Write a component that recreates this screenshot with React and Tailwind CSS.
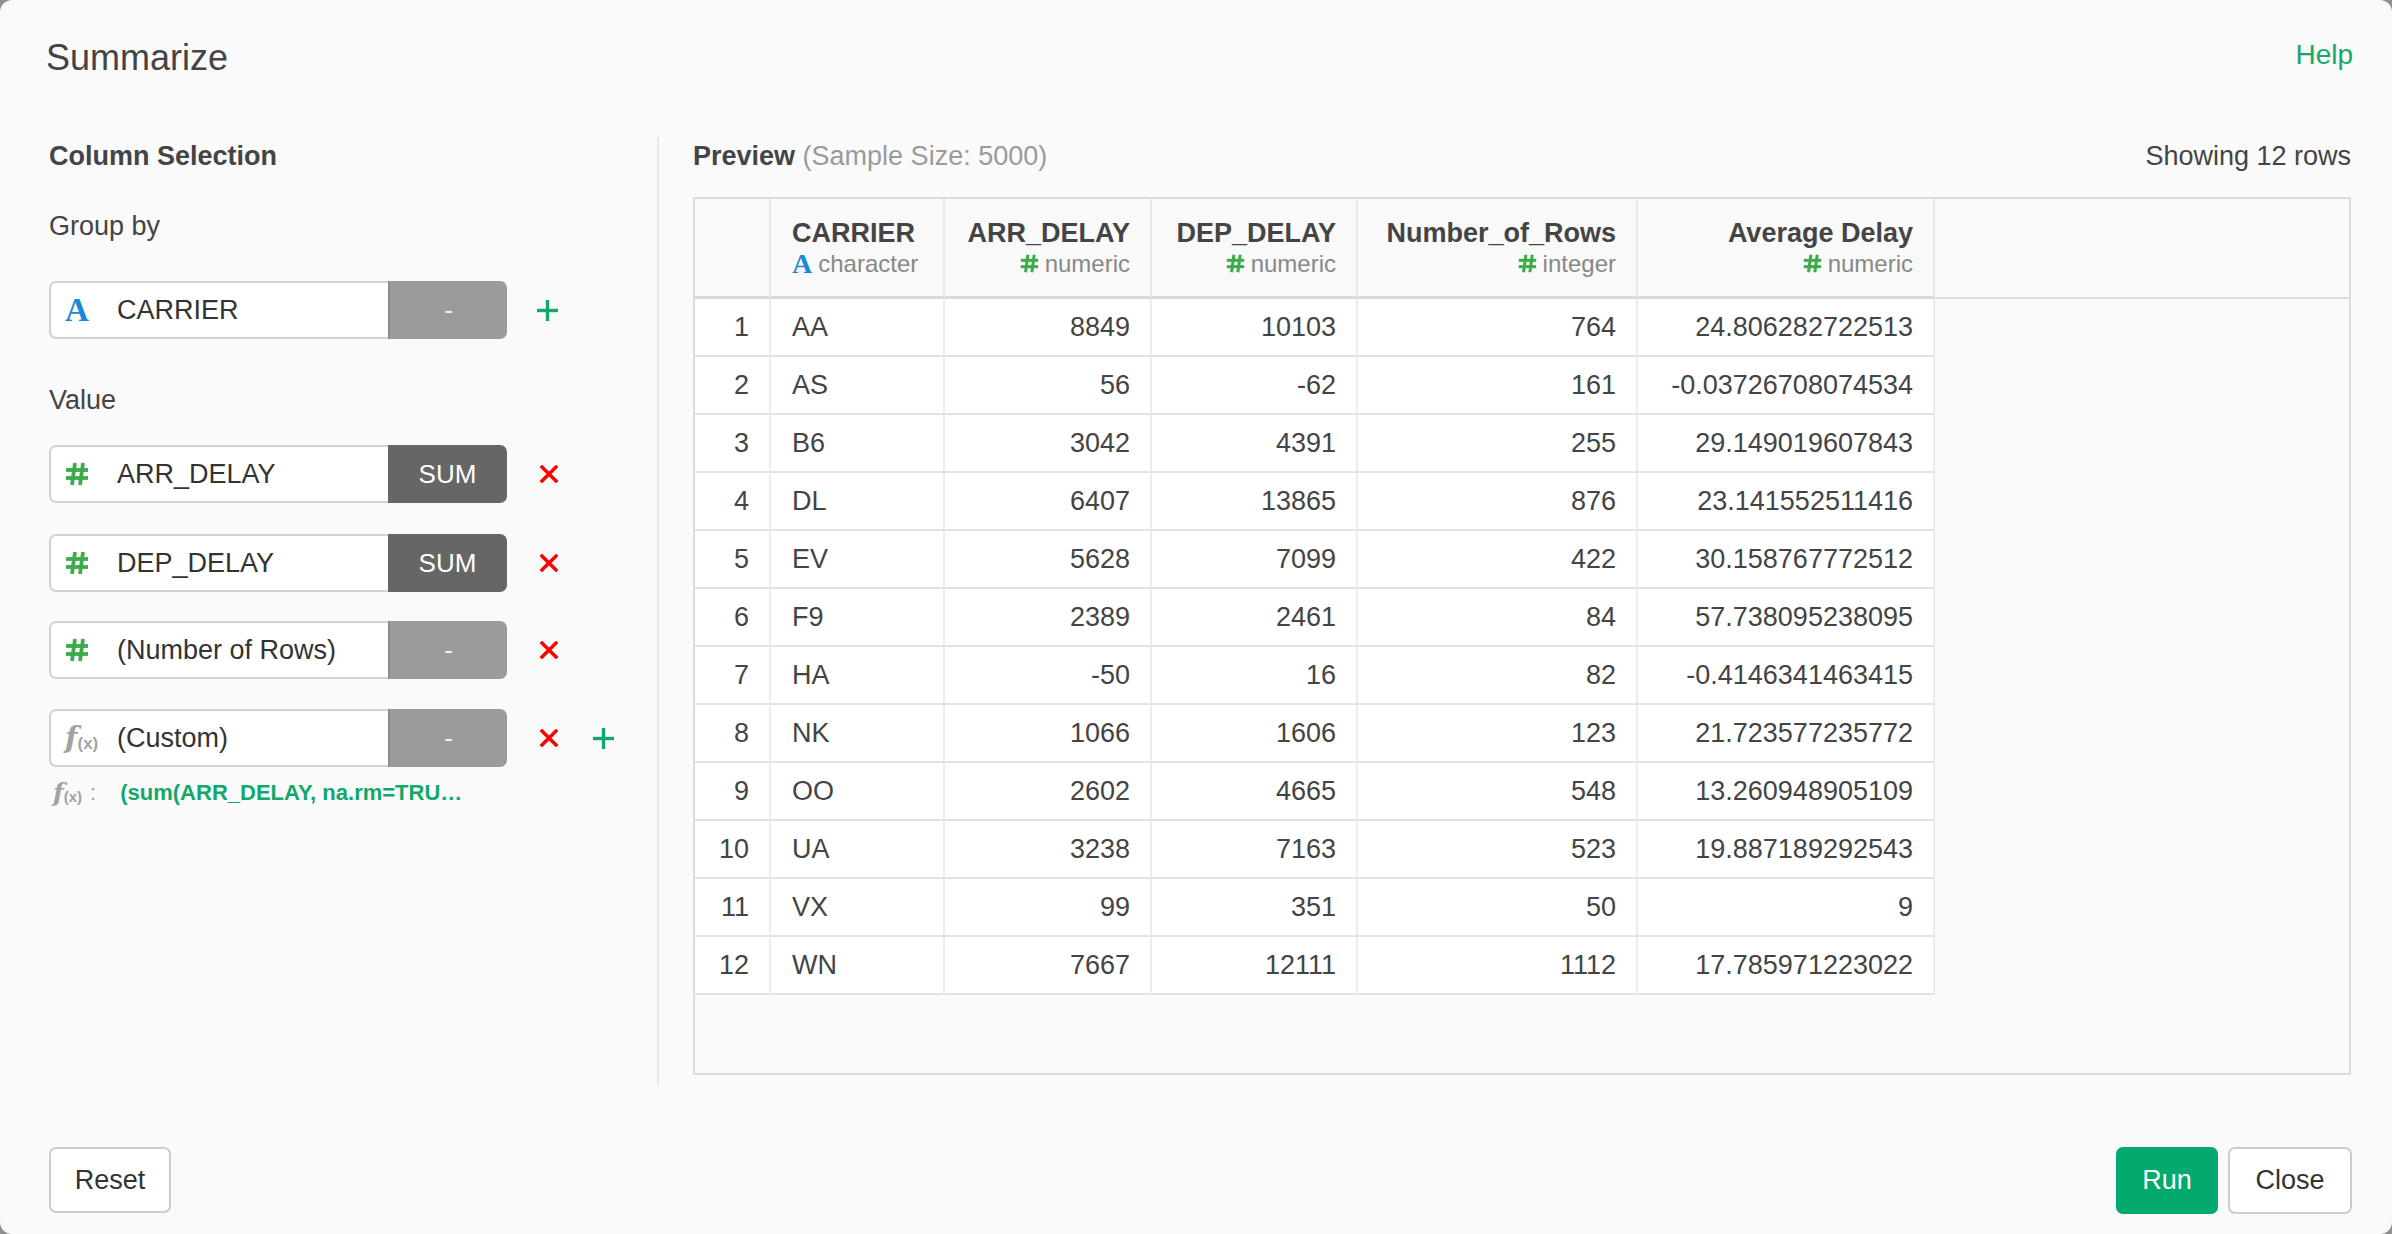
import React from 'react';

const rows = [
  ['1', 'AA', '8849', '10103', '764', '24.806282722513'],
  ['2', 'AS', '56', '-62', '161', '-0.03726708074534'],
  ['3', 'B6', '3042', '4391', '255', '29.149019607843'],
  ['4', 'DL', '6407', '13865', '876', '23.141552511416'],
  ['5', 'EV', '5628', '7099', '422', '30.158767772512'],
  ['6', 'F9', '2389', '2461', '84', '57.738095238095'],
  ['7', 'HA', '-50', '16', '82', '-0.4146341463415'],
  ['8', 'NK', '1066', '1606', '123', '21.723577235772'],
  ['9', 'OO', '2602', '4665', '548', '13.260948905109'],
  ['10', 'UA', '3238', '7163', '523', '19.887189292543'],
  ['11', 'VX', '99', '351', '50', '9'],
  ['12', 'WN', '7667', '12111', '1112', '17.785971223022'],
];

const widths = ['w-[76px]', 'w-[174px]', 'w-[207px]', 'w-[206px]', 'w-[280px]', 'w-[297px]'];

function Hash({ size = 24 }) {
  return (
    <svg width={size} height={size} viewBox="0 0 24 24" className="shrink-0">
      <g stroke="#3dab4a" strokeWidth="3.8" strokeLinecap="butt" fill="none">
        <line x1="1" y1="8" x2="23" y2="8" />
        <line x1="1" y1="16" x2="23" y2="16" />
        <line x1="10" y1="1" x2="7" y2="23" />
        <line x1="18" y1="1" x2="15" y2="23" />
      </g>
    </svg>
  );
}

function LetterA({ className }) {
  return <span className={"font-['Liberation_Serif',serif] font-bold text-[#1a8ad6] " + className}>A</span>;
}

function Fx({ big }) {
  return (
    <span className="text-[#a3a3a3] flex items-end leading-none">
      <span className={big ? "font-['DejaVu_Serif',serif] italic font-bold text-[29px]" : "font-['DejaVu_Serif',serif] italic font-bold text-[25px]"}>f</span>
      <span className={big ? 'font-bold text-[17px] mb-[1px]' : 'font-bold text-[15px] mb-[1px]'}>(x)</span>
    </span>
  );
}

function Cross() {
  return (
    <svg width="18" height="18" viewBox="0 0 18 18" className="shrink-0">
      <g stroke="#ff0000" strokeWidth="3.4" strokeLinecap="square">
        <line x1="2" y1="2" x2="16" y2="16" />
        <line x1="16" y1="2" x2="2" y2="16" />
      </g>
    </svg>
  );
}

function Plus() {
  return (
    <svg width="21" height="21" viewBox="0 0 21 21" className="shrink-0">
      <g stroke="#13a86b" strokeWidth="3.4">
        <line x1="10.5" y1="0" x2="10.5" y2="21" />
        <line x1="0" y1="10.5" x2="21" y2="10.5" />
      </g>
    </svg>
  );
}

function FieldBox({ icon, label, button, dark }) {
  return (
    <div className="flex h-[58px] w-[458px] shrink-0">
      <div className="w-[339px] flex items-center bg-white border-2 border-r-0 border-[#d2d2d2] rounded-l-[7px]">
        <div className="w-[66px] pl-[14px] flex items-center">{icon}</div>
        <span className="text-[27px] text-[#333]">{label}</span>
      </div>
      <div
        className={
          dark
            ? 'flex-1 flex items-center justify-center rounded-r-[7px] bg-[#666666] text-white text-[26px]'
            : 'flex-1 flex items-center justify-center rounded-r-[7px] bg-[#9b9b9b] border-l-2 border-[#8c8c8c] text-[#f0f0f0] text-[26px]'
        }
      >
        {button}
      </div>
    </div>
  );
}

function HeaderCell({ idx, title, typeIcon, type, left }) {
  return (
    <div
      className={
        widths[idx] +
        ' h-[100px] shrink-0 border-r-2 border-[#e8e8e8] border-b-[3px] border-b-[#dadada] flex flex-col justify-center ' +
        (left ? 'items-start pl-[21px]' : 'items-end pr-[20px]')
      }
    >
      {title && <div className="text-[27px] font-bold leading-[32px] text-[#444]">{title}</div>}
      {type && (
        <div className="flex items-center gap-[6px] leading-[30px] text-[24px] text-[#888]">
          {typeIcon}
          <span>{type}</span>
        </div>
      )}
    </div>
  );
}

export default function App() {
  return (
    <div className="w-[2392px] h-[1234px] bg-[#8e8e8e] font-['Liberation_Sans',Arial,sans-serif] text-[#444] overflow-hidden">
      <div className="w-full h-full bg-[#fafafa] rounded-[12px] flex flex-col">
        <header className="h-[116px] flex items-center justify-between pl-[46px] pr-[39px]">
          <h1 className="text-[36px] leading-[44px] text-[#444]">Summarize</h1>
          <a className="text-[28px] text-[#17a86b] -mt-[6px]">Help</a>
        </header>

        <div className="mt-[21px] h-[949px] flex">
          <div className="w-[659px] shrink-0 pl-[49px] border-r-2 border-[#e6e6e6] flex flex-col">
            <div className="text-[27px] font-bold leading-[38px]">Column Selection</div>
            <div className="mt-[32px] text-[27px] leading-[38px]">Group by</div>
            <div className="mt-[36px] flex items-center">
              <FieldBox icon={<LetterA className="text-[33px] leading-none" />} label="CARRIER" button="-" />
              <span className="ml-[30px]"><Plus /></span>
            </div>
            <div className="mt-[42px] text-[27px] leading-[38px]">Value</div>
            <div className="mt-[26px] flex items-center">
              <FieldBox icon={<Hash />} label="ARR_DELAY" button="SUM" dark />
              <span className="ml-[33px]"><Cross /></span>
            </div>
            <div className="mt-[31px] flex items-center">
              <FieldBox icon={<Hash />} label="DEP_DELAY" button="SUM" dark />
              <span className="ml-[33px]"><Cross /></span>
            </div>
            <div className="mt-[29px] flex items-center">
              <FieldBox icon={<Hash />} label="(Number of Rows)" button="-" />
              <span className="ml-[33px]"><Cross /></span>
            </div>
            <div className="mt-[30px] flex items-center">
              <FieldBox icon={<Fx big />} label="(Custom)" button="-" />
              <span className="ml-[33px]"><Cross /></span>
              <span className="ml-[35px]"><Plus /></span>
            </div>
            <div className="mt-[10px] h-[30px] flex items-center pl-[4px]">
              <Fx />
              <span className="ml-[8px] text-[22px] text-[#a3a3a3]">:</span>
              <span className="ml-[24px] text-[22px] font-bold text-[#13a86b]">(sum(ARR_DELAY, na.rm=TRU…</span>
            </div>
          </div>

          <div className="flex-1 pl-[34px] pr-[41px] flex flex-col">
            <div className="h-[38px] flex items-center justify-between text-[27px]">
              <div>
                <span className="font-bold text-[#444]">Preview</span>
                <span className="text-[#9a9a9a]"> (Sample Size: 5000)</span>
              </div>
              <span className="text-[#444]">Showing 12 rows</span>
            </div>

            <div className="mt-[22px] h-[878px] border-2 border-[#dcdcdc] bg-[#f9f9f9] flex flex-col">
              <div className="flex">
                <HeaderCell idx={0} />
                <HeaderCell idx={1} left title="CARRIER" typeIcon={<LetterA className="text-[28px] leading-none" />} type="character" />
                <HeaderCell idx={2} title="ARR_DELAY" typeIcon={<Hash size={19} />} type="numeric" />
                <HeaderCell idx={3} title="DEP_DELAY" typeIcon={<Hash size={19} />} type="numeric" />
                <HeaderCell idx={4} title="Number_of_Rows" typeIcon={<Hash size={19} />} type="integer" />
                <HeaderCell idx={5} title="Average Delay" typeIcon={<Hash size={19} />} type="numeric" />
                <div className="flex-1 h-[100px] border-b-2 border-[#dcdcdc]" />
              </div>
              {rows.map((r) => (
                <div key={r[0]} className="flex">
                  {r.map((v, i) => (
                    <div
                      key={i}
                      className={
                        widths[i] +
                        ' h-[58px] shrink-0 bg-white border-r-2 border-r-[#ececec] border-b-2 border-b-[#e2e2e2] flex items-center text-[27px] text-[#444] ' +
                        (i === 1 ? 'justify-start pl-[21px]' : 'justify-end pr-[20px]')
                      }
                    >
                      {v}
                    </div>
                  ))}
                </div>
              ))}
            </div>
          </div>
        </div>

        <footer className="pt-[61px] pl-[49px] pr-[40px] flex justify-between items-start">
          <button className="w-[122px] h-[66px] bg-white border-2 border-[#cccccc] rounded-[7px] text-[27px] text-[#333]">Reset</button>
          <div className="flex gap-[10px]">
            <button className="w-[102px] h-[67px] bg-[#03a96d] rounded-[7px] text-[27px] text-white">Run</button>
            <button className="w-[124px] h-[67px] bg-white border-2 border-[#cccccc] rounded-[7px] text-[27px] text-[#333]">Close</button>
          </div>
        </footer>
      </div>
    </div>
  );
}
